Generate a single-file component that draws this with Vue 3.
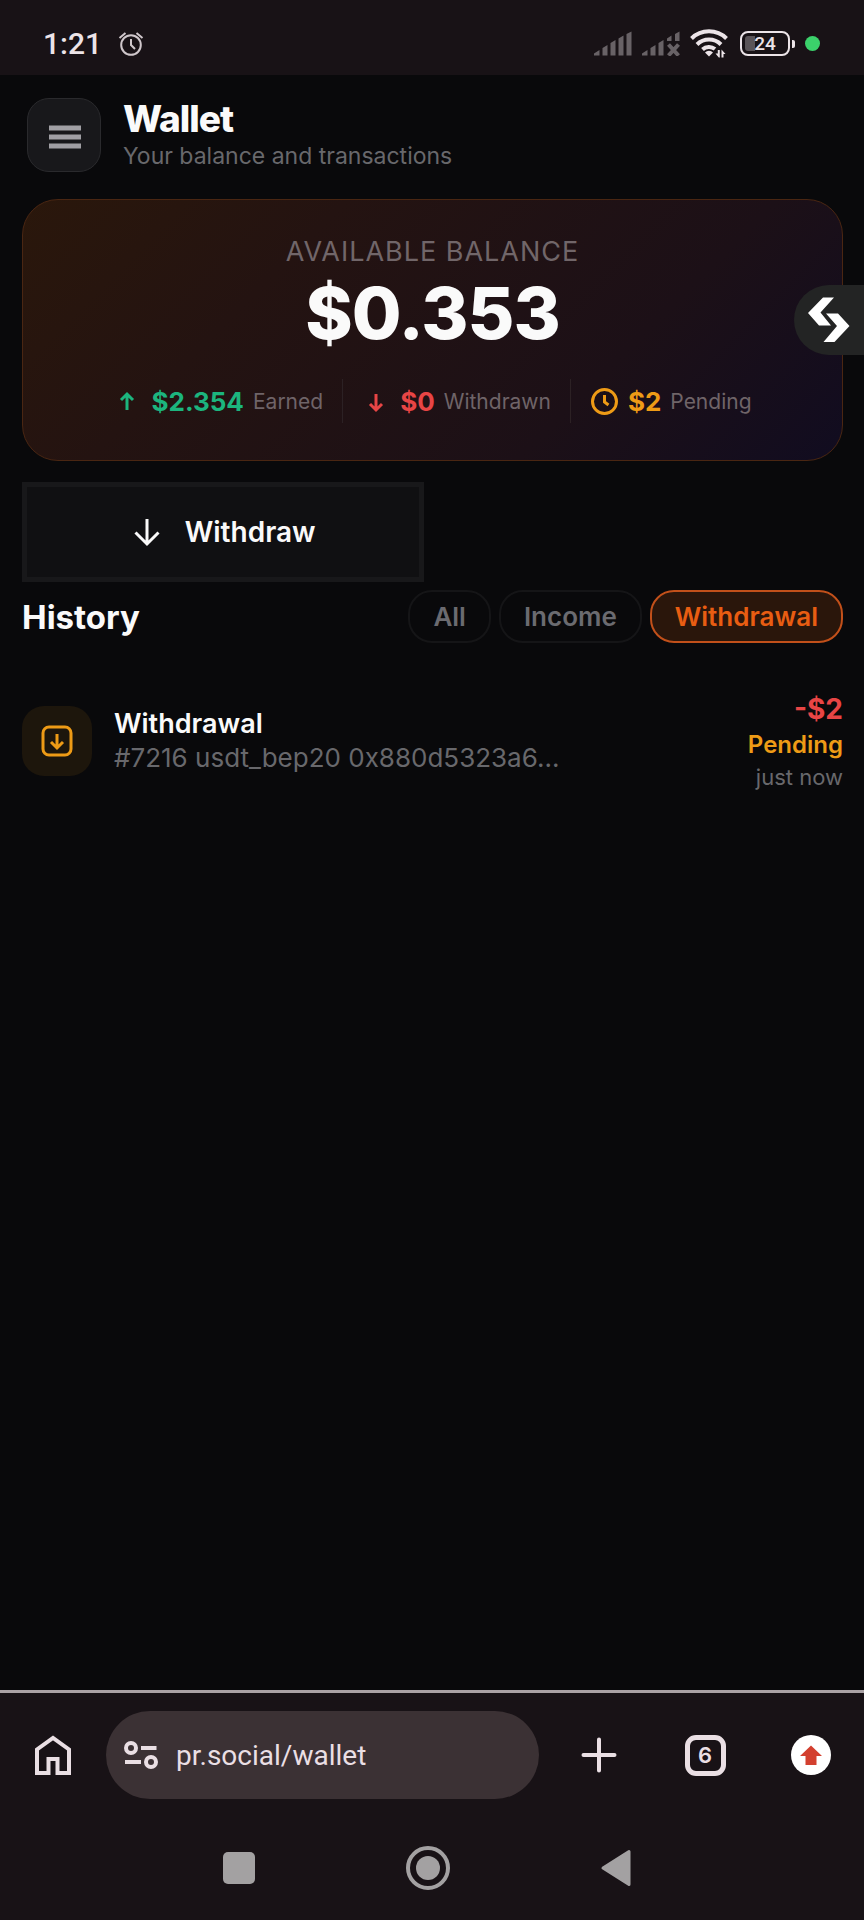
<template>
  <div class="screen">
    <div class="status-bar">
      <div class="status-left">
        <span class="clock">1:21</span>
        <svg class="alarm" viewBox="0 0 26 26" aria-hidden="true">
          <circle cx="13" cy="14" r="9.8" />
          <path d="M13 8v6l4 4" />
          <path d="M1.5 7 7.5 2M24.5 7l-6-5" />
        </svg>
      </div>
      <div class="status-right">
        <svg class="signal" viewBox="0 0 38 25" aria-hidden="true">
          <path d="M0 24.5v-2L5.5 19v5.5zM8.5 24.5V17l5-3v10.5zM16.5 24.5V12l5-3v15.5zM24.5 24.5v-17l5-3v20zM32.5 24.5V3l5-2.5v24z" />
        </svg>
        <svg class="signal" viewBox="0 0 38 25" aria-hidden="true">
          <path d="M0 24.5v-2L5.5 19v5.5zM8.5 24.5V17l5-3v10.5zM16.5 24.5V12l5-3v15.5zM25 10V7.5l4.5-3V10zM33 10V3l4.5-2.5V10z" />
          <path class="signal-x" d="m26.5 13.5 10 11m0-11-10 11" />
        </svg>
        <svg class="wifi" viewBox="0 0 38 30" aria-hidden="true">
          <path d="M1.5 9.5a25 25 0 0 1 35 0M7 15.5a17 17 0 0 1 24 0M12.5 20.5a9.5 9.5 0 0 1 12.5-.5" />
          <path class="solid" d="m19 27.5-4-4a5.5 5.5 0 0 1 8 0zM28.8 28.5l-3.3-4h2.3V21h2v7.5zM31.5 28.5v-8l4 4.5h-2v3.5z" />
        </svg>
        <div class="battery">
          <span class="battery-level" />
          <span class="battery-text">24</span>
        </div>
        <span class="privacy-dot" />
      </div>
    </div>

    <main class="page">
      <header class="header">
        <button class="menu-btn" type="button" aria-label="Menu">
          <svg viewBox="0 0 32 24" aria-hidden="true">
            <path d="M0 3h32M0 12h32M0 21h32" />
          </svg>
        </button>
        <div>
          <h1 class="title">Wallet</h1>
          <p class="subtitle">Your balance and transactions</p>
        </div>
      </header>

      <section class="balance-card">
        <div class="balance-label">AVAILABLE BALANCE</div>
        <div class="balance-amount">$0.353</div>
        <div class="stats">
          <div
            v-for="s in stats"
            :key="s.label"
            class="stat"
            :class="s.type"
          >
            <svg class="stat-icon" viewBox="0 0 29 29" aria-hidden="true">
              <circle v-if="s.type === 'pending'" cx="14.5" cy="14.5" r="12" />
              <path :d="s.icon" />
            </svg>
            <span class="stat-value">{{ s.value }}</span>
            <span class="stat-label">{{ s.label }}</span>
          </div>
        </div>
      </section>

      <button class="withdraw-btn" type="button">
        <svg viewBox="0 0 32 32" aria-hidden="true">
          <path d="M16 3v25M4.500 16.500 16 28l11.500-11.500" />
        </svg>
        Withdraw
      </button>

      <div class="history-head">
        <h2 class="history-title">History</h2>
        <div class="filters">
          <button
            v-for="f in filters"
            :key="f"
            type="button"
            class="filter-btn"
            :class="{ active: f === activeFilter }"
            @click="activeFilter = f"
          >
            {{ f }}
          </button>
        </div>
      </div>

      <ul class="history">
        <li v-for="t in visibleItems" :key="t.id" class="tx">
          <div class="tx-icon">
            <svg viewBox="0 0 32 32" aria-hidden="true">
              <rect x="2" y="2" width="28" height="28" rx="6" />
              <path d="M16 9v14M10 17l6 6 6-6" />
            </svg>
          </div>
          <div class="tx-body">
            <div class="tx-name">{{ t.type }}</div>
            <div class="tx-info">{{ t.info }}</div>
          </div>
          <div class="tx-side">
            <div class="tx-amount">{{ t.amount }}</div>
            <div class="tx-status">{{ t.status }}</div>
            <div class="tx-time">{{ t.time }}</div>
          </div>
        </li>
      </ul>
    </main>

    <button class="floating-btn" type="button" aria-label="Open panel">
      <svg viewBox="0 0 42 46" aria-hidden="true">
        <path d="M15 .5h11l-13.500 15L23 28.500H11L0 16z" />
        <path d="M18 16.500h12L41.500 29l-15 16h-11l13.500-16z" />
      </svg>
    </button>

    <footer class="bottom">
      <div class="browser-bar">
        <button class="bar-btn" type="button" aria-label="Home">
          <svg class="home" viewBox="0 0 36 40" aria-hidden="true">
            <path d="M2 38V14.500L18 3l16 11.500V38H22.500V24h-9v14z" />
          </svg>
        </button>
        <div class="url-bar">
          <svg viewBox="0 0 34 28" aria-hidden="true">
            <circle cx="7" cy="7" r="5" />
            <circle cx="27" cy="21" r="5" />
            <path d="M17 7h15.500M1 21h16" />
          </svg>
          <input v-model="url" type="text" aria-label="Address">
        </div>
        <button class="bar-btn" type="button" aria-label="New tab">
          <svg class="plus" viewBox="0 0 36 36" aria-hidden="true">
            <path d="M18 2.500v31M2.500 18h31" />
          </svg>
        </button>
        <button class="bar-btn" type="button" aria-label="Tabs">
          <span class="tab-count">6</span>
        </button>
        <button class="bar-btn" type="button" aria-label="Update">
          <svg class="update" viewBox="0 0 40 40" aria-hidden="true">
            <circle cx="20" cy="20" r="20" />
            <path d="M20 10.500 31 21h-5.500v9h-11v-9H9z" />
          </svg>
        </button>
      </div>
      <nav class="system-nav">
        <button type="button" aria-label="Recent apps">
          <svg viewBox="0 0 44 44" aria-hidden="true">
            <rect x="6" y="6" width="32" height="32" rx="5" />
          </svg>
        </button>
        <button type="button" aria-label="Home screen">
          <svg viewBox="0 0 44 44" aria-hidden="true">
            <circle class="ring" cx="22" cy="22" r="20" />
            <circle cx="22" cy="22" r="12" />
          </svg>
        </button>
        <button type="button" aria-label="Back">
          <svg viewBox="0 0 44 44" aria-hidden="true">
            <path d="M8 22 34 5.500v33z" stroke-width="3" stroke-linejoin="round" />
          </svg>
        </button>
      </nav>
    </footer>
  </div>
</template>

<script setup>
import { computed, ref } from 'vue';

const stats = [
  { type: 'earned', value: '$2.354', label: 'Earned', icon: 'M14 23V7M8 13l6-6 6 6' },
  { type: 'withdrawn', value: '$0', label: 'Withdrawn', icon: 'M14 7v16M8 17l6 6 6-6' },
  { type: 'pending', value: '$2', label: 'Pending', icon: 'M14.5 8v7l4 3' },
];

const filters = ['All', 'Income', 'Withdrawal'];
const activeFilter = ref('Withdrawal');

const transactions = [
  {
    id: 7216,
    type: 'Withdrawal',
    info: '#7216 usdt_bep20 0x880d5323a6...',
    amount: '-$2',
    status: 'Pending',
    time: 'just now',
  },
];

const visibleItems = computed(() =>
  activeFilter.value === 'All'
    ? transactions
    : transactions.filter((t) => t.type === activeFilter.value)
);

const url = ref('pr.social/wallet');
</script>

<style>
body {
  margin: 0;
  background-color: #09090b;
}
</style>

<style scoped>
.screen {
  position: relative;
  display: flex;
  flex-direction: column;
  min-height: 100vh;
  background-color: #09090b;
  color: #fafafa;
  font-family: Inter, "Liberation Sans", sans-serif;
}

button {
  font-family: inherit;
  cursor: pointer;
}

svg {
  display: block;
  flex-shrink: 0;
  fill: none;
  stroke: currentColor;
}

h1,
h2,
p,
ul {
  margin: 0;
  padding: 0;
}

.status-bar {
  display: flex;
  align-items: center;
  justify-content: space-between;
  height: 75px;
  padding: 12px 44px 0 43px;
  box-sizing: border-box;
  background-color: #181216;
  color: #ece4e8;
}

.status-left,
.status-right {
  display: flex;
  align-items: center;
}

.status-left {
  gap: 16px;
}

.clock {
  font-family: Roboto, sans-serif;
  font-size: 30px;
  font-weight: 500;
  line-height: 36px;
}

.alarm {
  width: 26px;
  height: 26px;
  stroke-width: 2;
  color: #cfc7cb;
}

.status-right {
  gap: 10px;
}

.signal {
  width: 38px;
  height: 25px;
  color: #686266;
}

.signal path {
  fill: currentColor;
  stroke: none;
}

.signal .signal-x {
  fill: none;
  stroke: currentColor;
  stroke-width: 4;
}

.wifi {
  width: 38px;
  height: 30px;
  stroke-width: 4;
}

.wifi .solid {
  fill: currentColor;
  stroke: none;
}

.battery {
  position: relative;
  display: flex;
  align-items: center;
  justify-content: center;
  width: 50px;
  height: 25px;
  margin: 0 5px 0 2px;
  border: 2px solid #ece4e8;
  border-radius: 8px;
  box-sizing: border-box;
}

.battery::after {
  content: "";
  position: absolute;
  right: -7px;
  width: 3px;
  height: 8px;
  border-radius: 0 2px 2px 0;
  background-color: #ece4e8;
}

.battery-level {
  position: absolute;
  left: 3px;
  top: 3px;
  bottom: 3px;
  width: 10px;
  border-radius: 3px 0 0 3px;
  background-color: #5a5458;
}

.battery-text {
  position: relative;
  font-family: Roboto, sans-serif;
  font-size: 19px;
  font-weight: 500;
  line-height: 20px;
}

.privacy-dot {
  width: 15px;
  height: 15px;
  border-radius: 50%;
  background-color: #3bd16b;
}

.page {
  flex: 1;
  padding: 23px 21px 0 22px;
}

.header {
  display: flex;
  align-items: center;
  gap: 22px;
  padding: 0 5px;
}

.menu-btn {
  display: flex;
  align-items: center;
  justify-content: center;
  width: 74px;
  height: 74px;
  padding: 0;
  border: 1px solid #2a2a2d;
  border-radius: 22px;
  background-color: #18181b;
  color: #a09fa4;
}

.menu-btn svg {
  width: 32px;
  height: 24px;
  margin: 4px 0 0 2px;
  stroke-width: 5;
}

.title {
  font-size: 37px;
  font-weight: 800;
  line-height: 42px;
  letter-spacing: -1px;
}

.subtitle {
  font-size: 23px;
  line-height: 32px;
  color: #68686c;
}

.balance-card {
  display: flex;
  flex-direction: column;
  align-items: center;
  margin-top: 27px;
  padding: 35px 20px 37px;
  border: 1px solid #4a2612;
  border-radius: 36px;
  background: linear-gradient(135deg, #2a170b 0%, #241311 30%, #1c1017 70%, #110c20 100%);
}

.balance-label {
  font-size: 27px;
  line-height: 34px;
  letter-spacing: 1px;
  color: #716669;
}

.balance-amount {
  font-size: 72px;
  font-weight: 800;
  line-height: 88px;
  letter-spacing: -1px;
}

.stats {
  display: flex;
  margin-top: 22px;
}

.stat {
  display: flex;
  align-items: center;
  gap: 9px;
  height: 44px;
  padding: 0 19px;
}

.stat + .stat {
  border-left: 1px solid #2c2124;
}

.stat-icon {
  width: 29px;
  height: 29px;
  stroke-width: 3;
}

.stat-value {
  font-size: 26px;
  font-weight: 700;
}

.stat-label {
  font-size: 21px;
  color: #6f6468;
}

.earned {
  color: #1cb57e;
}

.withdrawn {
  color: #e84545;
}

.pending {
  color: #ee9b16;
}

.withdraw-btn {
  display: flex;
  align-items: center;
  justify-content: center;
  gap: 22px;
  width: 49%;
  height: 100px;
  margin-top: 21px;
  padding: 0;
  border: 5px solid #18181a;
  background-color: #101012;
  color: #fafafa;
  font-size: 28px;
  font-weight: 600;
}

.withdraw-btn svg {
  width: 32px;
  height: 32px;
  stroke-width: 3;
}

.history-head {
  display: flex;
  align-items: center;
  justify-content: space-between;
  margin-top: 8px;
}

.history-title {
  font-size: 33px;
  font-weight: 700;
  line-height: 40px;
}

.filters {
  display: flex;
  gap: 8px;
}

.filter-btn {
  height: 53px;
  padding: 0 23px;
  border: 2px solid #151517;
  border-radius: 24px;
  background-color: transparent;
  color: #6b6b70;
  font-size: 26px;
  font-weight: 600;
}

.filter-btn.active {
  border-color: #c2501a;
  background-color: #2a160b;
  color: #e85d12;
}

.history {
  margin-top: 47px;
  list-style: none;
}

.tx {
  display: flex;
  align-items: center;
  gap: 22px;
}

.tx-icon {
  display: flex;
  align-items: center;
  justify-content: center;
  width: 70px;
  height: 70px;
  border-radius: 22px;
  background-color: #1d160c;
  color: #ee9b16;
}

.tx-icon svg {
  width: 32px;
  height: 32px;
  stroke-width: 3;
}

.tx-body {
  flex: 1;
}

.tx-name {
  font-size: 27px;
  font-weight: 600;
  line-height: 34px;
}

.tx-info {
  font-size: 26px;
  line-height: 34px;
  color: #68686c;
}

.tx-side {
  text-align: right;
}

.tx-amount {
  font-size: 28px;
  font-weight: 700;
  line-height: 38px;
  color: #e84545;
}

.tx-status {
  font-size: 24px;
  font-weight: 600;
  line-height: 34px;
  color: #ee9b16;
}

.tx-time {
  font-size: 22px;
  line-height: 30px;
  color: #68686c;
}

/* sits over the page, glued to the right edge */
.floating-btn {
  position: absolute;
  top: 285px;
  right: 0;
  display: flex;
  align-items: center;
  width: 70px;
  height: 70px;
  padding: 0 0 0 14px;
  border: 0;
  border-radius: 35px 0 0 35px;
  background-color: #232424;
  color: #fff;
}

.floating-btn svg {
  width: 42px;
  height: 46px;
  fill: currentColor;
  stroke: none;
}

.bottom {
  border-top: 3px solid #aaa2a5;
  background-color: #181216;
  color: #eadfe4;
}

.browser-bar {
  display: flex;
  align-items: center;
  padding: 18px 0 17px;
}

.bar-btn {
  display: flex;
  align-items: center;
  justify-content: center;
  width: 106px;
  height: 88px;
  padding: 0;
  border: 0;
  background: none;
  color: inherit;
}

.home {
  width: 36px;
  height: 40px;
  stroke-width: 4;
}

.url-bar {
  display: flex;
  flex: 1;
  align-items: center;
  gap: 18px;
  height: 88px;
  min-width: 0;
  margin-right: 7px;
  padding: 0 18px;
  box-sizing: border-box;
  border-radius: 44px;
  background-color: #3b3134;
}

.url-bar svg {
  width: 34px;
  height: 28px;
  stroke-width: 4;
}

.url-bar input {
  flex: 1;
  min-width: 0;
  padding: 0;
  border: 0;
  outline: none;
  background: none;
  color: inherit;
  font-family: Roboto, sans-serif;
  font-size: 28px;
}

.plus {
  width: 36px;
  height: 36px;
  stroke-width: 4;
  stroke-linecap: round;
}

.tab-count {
  width: 41px;
  height: 41px;
  border: 5px solid #eadfe4;
  border-radius: 11px;
  box-sizing: border-box;
  font-size: 22px;
  font-weight: 600;
  line-height: 31px;
}

.update {
  width: 40px;
  height: 40px;
  stroke: none;
}

.update circle {
  fill: #fff;
}

.update path {
  fill: #d3402f;
}

.system-nav {
  display: flex;
  justify-content: center;
  gap: 145px;
  padding: 30px 8px 30px 0;
}

.system-nav button {
  padding: 0;
  border: 0;
  background: none;
  color: #a3a1a2;
}

.system-nav svg {
  width: 44px;
  height: 44px;
  fill: currentColor;
}

.system-nav rect,
.system-nav circle {
  stroke: none;
}

.system-nav .ring {
  fill: none;
  stroke: currentColor;
  stroke-width: 4;
}
</style>
